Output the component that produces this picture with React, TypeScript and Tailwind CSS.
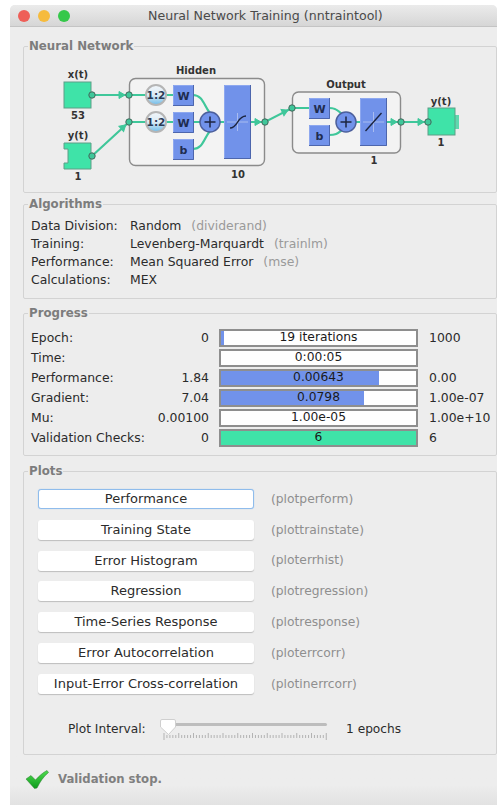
import React from "react";

const uiFont = "font-['DejaVu_Sans',sans-serif]";

const GREEN = "#3fe3a8";
const BLUE = "#7192ea";

type BarRow = {
  label: string;
  start: string;
  text: string;
  end: string;
  fill?: number;
  green?: boolean;
};

const progressRows: BarRow[] = [
  { label: "Epoch:", start: "0", text: "19 iterations", end: "1000", fill: 1.6 },
  { label: "Time:", start: "", text: "0:00:05", end: "" },
  { label: "Performance:", start: "1.84", text: "0.00643", end: "0.00", fill: 81 },
  { label: "Gradient:", start: "7.04", text: "0.0798", end: "1.00e-07", fill: 73.5 },
  { label: "Mu:", start: "0.00100", text: "1.00e-05", end: "1.00e+10" },
  { label: "Validation Checks:", start: "0", text: "6", end: "6", fill: 100, green: true },
];

const plots = [
  ["Performance", "(plotperform)"],
  ["Training State", "(plottrainstate)"],
  ["Error Histogram", "(ploterrhist)"],
  ["Regression", "(plotregression)"],
  ["Time-Series Response", "(plotresponse)"],
  ["Error Autocorrelation", "(ploterrcorr)"],
  ["Input-Error Cross-correlation", "(plotinerrcorr)"],
];

const algorithms = [
  ["Data Division:", "Random", "(dividerand)"],
  ["Training:", "Levenberg-Marquardt", "(trainlm)"],
  ["Performance:", "Mean Squared Error", "(mse)"],
  ["Calculations:", "MEX", ""],
];

function Panel({
  title,
  className,
  children,
}: {
  title: string;
  className: string;
  children: React.ReactNode;
}) {
  return (
    <fieldset className={`ml-[13px] w-[474px] rounded-[2px] border border-[#d3d3d3] ${className}`}>
      <legend className="ml-[4px] px-[1px] text-[11.8px] leading-[14px] font-bold text-[#7d7d7d]">
        {title}
      </legend>
      {children}
    </fieldset>
  );
}

function Node({ x, y }: { x: number; y: number }) {
  return <circle cx={x} cy={y} r={3.2} fill="#3fc79a" stroke="#44685c" strokeWidth={1} />;
}

function Arrow({ x, y, angle = 0 }: { x: number; y: number; angle?: number }) {
  return (
    <path
      d="M-5 -3.5 L1 0 L-5 3.5 Z"
      fill="#3fc79a"
      stroke="#3fc79a"
      transform={`translate(${x} ${y}) rotate(${angle})`}
    />
  );
}

// blue block with a lighter top-left edge and a darker bottom-right edge
function Block({ x, y, w, h }: { x: number; y: number; w: number; h: number }) {
  return (
    <g>
      <rect x={x} y={y} width={w} height={h} fill={BLUE} />
      <path d={`M${x + 0.5} ${y + h} V${y + 0.5} H${x + w}`} fill="none" stroke="#8ea8ef" strokeWidth={1} />
      <path d={`M${x} ${y + h - 0.5} H${x + w - 0.5} V${y}`} fill="none" stroke="#4d66ad" strokeWidth={1} />
    </g>
  );
}

function Square({ x, y, label }: { x: number; y: number; label: string }) {
  return (
    <g>
      <Block x={x} y={y} w={21} h={21} />
      <text x={x + 10.5} y={y + 14.5} textAnchor="middle" fontSize={11} fontWeight="bold" fill="#1f2c50">
        {label}
      </text>
    </g>
  );
}

function Delay({ y }: { y: number }) {
  return (
    <g>
      <circle cx={156} cy={y} r={10} fill="url(#delayFill)" stroke="#b5b5b5" strokeWidth={2} />
      <text x={156} y={y + 4} textAnchor="middle" fontSize={10.5} fontWeight="bold" fill="#2b3a55">
        1:2
      </text>
    </g>
  );
}

function Sum({ x, y }: { x: number; y: number }) {
  return (
    <g>
      <circle cx={x} cy={y} r={10} fill={BLUE} stroke="#4c5f9c" strokeWidth={1.5} />
      <path d={`M${x - 5.5} ${y} H${x + 5.5} M${x} ${y - 5.5} V${y + 5.5}`} stroke="#1c2540" strokeWidth={1.5} />
    </g>
  );
}

function Label({ x, y, children }: { x: number; y: number; children: React.ReactNode }) {
  return (
    <text x={x} y={y} textAnchor="middle" fontSize={10} fontWeight="bold" fill="#333">
      {children}
    </text>
  );
}

function NetworkDiagram() {
  return (
    <svg width={470} height={136} viewBox="24 54 470 136" className="mt-[1px] block">
      <defs>
        <linearGradient id="delayFill" x1="0" y1="0" x2="0" y2="1">
          <stop offset="0" stopColor="#f2f6fa" />
          <stop offset="0.5" stopColor="#dcebf5" />
          <stop offset="1" stopColor="#6dbcea" />
        </linearGradient>
      </defs>

      {/* inputs */}
      <rect x={64} y={82} width={27} height={26} fill={GREEN} stroke="#5f9e87" strokeWidth={1} />
      <path d="M64 143 H91 V169 H64 V163 H68 V149 H64 Z" fill={GREEN} stroke="#5f9e87" strokeWidth={1} />
      <Label x={78} y={78}>x(t)</Label>
      <Label x={78} y={119}>53</Label>
      <Label x={78} y={139}>y(t)</Label>
      <Label x={78} y={180}>1</Label>

      {/* layer frames */}
      <rect x={129.5} y={78.5} width={135} height={87} rx={6} fill="#f3f3f3" stroke="#8b8b8b" strokeWidth={1.4} />
      <rect x={292.5} y={92} width={108} height={61} rx={6} fill="#f3f3f3" stroke="#8b8b8b" strokeWidth={1.4} />
      <Label x={196} y={74}>Hidden</Label>
      <Label x={238} y={178}>10</Label>
      <Label x={346} y={88}>Output</Label>
      <Label x={374} y={164}>1</Label>

      {/* wires */}
      <g fill="none" stroke="#3fc79a" strokeWidth={2.2}>
        <path d="M92 95 H173 M92 156 L129 122 H173" />
        <path d="M193 95 C203 95 204 106 210 113 M193 122 H200 M193 149 C203 149 204 138 210 131" />
        <path d="M220 122 H224 M251 122 H265 L292 108 H309" />
        <path d="M329 108 C337 108 338 111 342 114 M329 135 C337 135 338 133 342 130 M356 122 H360" />
        <path d="M387 122 H428" />
      </g>
      <Arrow x={124} y={95} />
      <Arrow x={125} y={125.5} angle={-42} />
      <Arrow x={260} y={122} />
      <Arrow x={287} y={110.5} angle={-25} />
      <Arrow x={396} y={122} />
      <Arrow x={423} y={122} />

      {/* hidden layer */}
      <Delay y={95} />
      <Delay y={122} />
      <Square x={173} y={85} label="W" />
      <Square x={173} y={112} label="W" />
      <Square x={173} y={139} label="b" />
      <Sum x={210} y={122} />
      <Block x={224} y={85} w={27} h={74} />
      <path d="M227 122 H248 M237.5 113 V131" stroke="#a9bcf0" strokeWidth={1} />
      <path d="M230 128 C238 128 237 116 246 116" fill="none" stroke="#1c2540" strokeWidth={1.4} />

      {/* output layer */}
      <Square x={309} y={98} label="W" />
      <Square x={309} y={125} label="b" />
      <Sum x={346} y={122} />
      <Block x={360} y={98} w={27} h={48} />
      <path d="M363 122 H384 M373.5 112 V132" stroke="#a9bcf0" strokeWidth={1} />
      <path d="M365.5 131 L381.5 113" stroke="#1c2540" strokeWidth={1.4} />

      {/* output block */}
      <rect x={455} y={115} width={4} height={14} fill="#5fd8ae" />
      <rect x={428} y={108} width={27} height={27} fill={GREEN} stroke="#5f9e87" strokeWidth={1} />
      <Label x={441} y={105}>y(t)</Label>
      <Label x={441} y={146}>1</Label>

      <Node x={92} y={95} />
      <Node x={92} y={156} />
      <Node x={129} y={95} />
      <Node x={129} y={122} />
      <Node x={265} y={122} />
      <Node x={292} y={108} />
      <Node x={401} y={122} />
      <Node x={428} y={122} />
    </svg>
  );
}

function ProgressBar({ row }: { row: BarRow }) {
  return (
    <div className="relative h-[18px] w-[199px] border-2 border-[#8e8e8e] bg-white">
      {row.fill !== undefined && (
        <div
          className={`h-full ${row.green ? "bg-[#3fe3a8]" : "bg-[#7192ea]"}`}
          style={{ width: `${row.fill}%` }}
        />
      )}
      <span className="absolute inset-0 text-center text-[12.3px] leading-[13px] text-[#1a1a1a]">{row.text}</span>
    </div>
  );
}

function SliderTicks() {
  const ticks = Array.from({ length: 56 }, (_, i) => i);
  return (
    <svg width={166} height={8} viewBox="0 0 166 8" className="block">
      {ticks.map((i) => (
        <line
          key={i}
          x1={1 + i * 2.95}
          x2={1 + i * 2.95}
          y1={i % 5 === 0 ? 0 : 2}
          y2={i === 0 || i === 55 ? 7 : 5}
          stroke="#b3b3b3"
          strokeWidth={1}
        />
      ))}
    </svg>
  );
}

export default function App() {
  return (
    <div className={`h-[805px] w-[497px] overflow-hidden bg-white pt-[5px] pl-[10px] ${uiFont}`}>
      <div className="flex h-[800px] w-[487px] flex-col rounded-t-[5px] bg-[#ededed]">
        {/* title bar */}
        <div className="flex h-[22px] shrink-0 items-center rounded-t-[5px] border-b border-[#c4c4c4] bg-gradient-to-b from-[#ebebeb] to-[#d6d6d6] pl-[8px]">
          <div className="flex gap-[8px]">
            <span className="h-[12px] w-[12px] rounded-full bg-[#ee5f58]" />
            <span className="h-[12px] w-[12px] rounded-full bg-[#f6bb3d]" />
            <span className="h-[12px] w-[12px] rounded-full bg-[#35c84a]" />
          </div>
          <div className="ml-[78px] pt-[1px] text-[12.6px] leading-[14px] whitespace-nowrap text-[#4a4a4a]">
            Neural Network Training (nntraintool)
          </div>
        </div>

        <Panel title="Neural Network" className="mt-[12px] h-[154px]">
          <NetworkDiagram />
        </Panel>

        <Panel title="Algorithms" className="mt-[4px] h-[102px]">
          <div className="mt-[6px] pl-[7px] text-[12.4px] leading-[18px] text-[#2b2b2b]">
            {algorithms.map(([name, value, code]) => (
              <div key={name} className="flex">
                <span className="w-[99px] shrink-0">{name}</span>
                <span>{value}</span>
                {code && <span className="ml-[10px] text-[#9a9a9a]">{code}</span>}
              </div>
            ))}
          </div>
        </Panel>

        <Panel title="Progress" className="mt-[7px] h-[150px]">
          <div className="mt-[9px] flex flex-col gap-[2px] pl-[7px] text-[12.4px] leading-[18px] text-[#2b2b2b]">
            {progressRows.map((row) => (
              <div key={row.label} className="flex h-[18px] items-center">
                <span className="w-[178px] shrink-0 whitespace-nowrap">
                  <span className="float-left">{row.label}</span>
                  <span className="float-right">{row.start}</span>
                </span>
                <span className="ml-[10px]">
                  <ProgressBar row={row} />
                </span>
                <span className="ml-[11px] whitespace-nowrap">{row.end}</span>
              </div>
            ))}
          </div>
        </Panel>

        <Panel title="Plots" className="mt-[8px] h-[291px]">
          <div className="mt-[11px] flex flex-col gap-[10.8px] pl-[14px]">
            {plots.map(([name, fn], i) => (
              <div key={name} className="flex h-[20px] items-center">
                <button
                  className={`h-[20px] w-[216px] rounded-[3px] bg-white text-center text-[13px] leading-[18px] whitespace-nowrap text-[#2b2b2b] ${
                    i === 0
                      ? "border border-[#8fbcec] shadow-[0_0_1px_#8fbcec]"
                      : "shadow-[0_1px_1px_#bdbdbd]"
                  }`}
                >
                  {name}
                </button>
                <span className="ml-[17px] text-[12.3px] text-[#8f8f8f]">{fn}</span>
              </div>
            ))}
          </div>

          <div className="mt-[23px] flex items-center pl-[44px] text-[12.2px] text-[#2b2b2b]">
            <span className="w-[92px] shrink-0 whitespace-nowrap">Plot Interval:</span>
            <div className="relative h-[24px] w-[168px]">
              <div className="mt-[6px] ml-[12px] h-[3px] w-[155px] rounded-full bg-[#bdbdbd]" />
              {/* thumb sits over the track */}
              <svg width={16} height={17} viewBox="0 0 16 17" className="absolute top-[2px] left-0">
                <path d="M2 .5 H14 Q15.5 .5 15.5 2 V8 L8.5 15.5 L.5 8 V2 Q.5 .5 2 .5 Z" fill="#fff" stroke="#cfcfcf" />
              </svg>
              <div className="mt-[7px] ml-[3px]">
                <SliderTicks />
              </div>
            </div>
            <span className="ml-[18px] whitespace-nowrap">1 epochs</span>
          </div>
        </Panel>

        {/* status line */}
        <div className="flex flex-1 items-start bg-gradient-to-b from-[#ededed] from-60% to-[#e2e2e2] pt-[14px] pl-[15px]">
          <svg width={24} height={20} viewBox="0 0 24 20">
            <defs>
              <linearGradient id="checkFill" x1="0" y1="0" x2="0" y2="1">
                <stop offset="0" stopColor="#4fdc4f" />
                <stop offset="1" stopColor="#0d9a1c" />
              </linearGradient>
            </defs>
            <path
              d="M1 10 L6 6.5 L10.5 11 C14 7 18 3.5 22 1.5 L23.5 3.5 C18 8 15 13 12 19 L9.5 19.5 Z"
              fill="url(#checkFill)"
              stroke="#2a7a2f"
              strokeWidth={0.5}
            />
          </svg>
          <span className="mt-[1px] ml-[9px] text-[11.7px] leading-[18px] font-bold text-[#808080]">
            Validation stop.
          </span>
        </div>
      </div>
    </div>
  );
}
